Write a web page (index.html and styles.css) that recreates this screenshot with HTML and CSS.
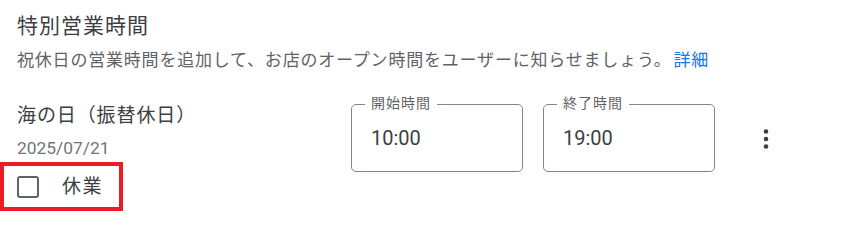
FILE: index.html
```html
<!DOCTYPE html>
<html lang="ja">
<head>
<meta charset="utf-8">
<title>特別営業時間</title>
<link rel="stylesheet" href="styles.css">
</head>
<body>
<div class="page">
  <h1 class="title">特別営業時間</h1>
  <p class="desc">祝休日の営業時間を追加して、お店のオープン時間をユーザーに知らせましょう。<a class="link" href="#">詳細</a></p>
  <div class="row">
    <div class="day">
      <div class="day-name">海の日（振替休日）</div>
      <div class="day-date">2025/07/21</div>
      <label class="closed">
        <span class="checkbox"></span>
        <span class="closed-label">休業</span>
      </label>
    </div>
    <div class="field">
      <span class="field-label">開始時間</span>
      <span class="field-value">10:00</span>
    </div>
    <div class="field">
      <span class="field-label">終了時間</span>
      <span class="field-value">19:00</span>
    </div>
    <div class="more">
      <svg width="30" height="30" viewBox="0 0 24 24" aria-hidden="true">
        <circle cx="12" cy="6" r="1.85" fill="#3c4043"/>
        <circle cx="12" cy="12" r="1.85" fill="#3c4043"/>
        <circle cx="12" cy="18" r="1.85" fill="#3c4043"/>
      </svg>
    </div>
  </div>
</div>
</body>
</html>
```
FILE: styles.css
```css
html, body {
  margin: 0;
  padding: 0;
  background: #ffffff;
}
body {
  font-family: Roboto, "Noto Sans CJK JP", sans-serif;
  color: #3c4043;
}
.page {
  padding: 13px 0 0 17px;
}
.title {
  margin: 0;
  font-size: 21px;
  line-height: 26px;
  font-weight: 400;
  letter-spacing: 1px;
  color: #3c4043;
}
.desc {
  margin: 9px 0 0 0;
  font-size: 17px;
  line-height: 24px;
  letter-spacing: 0.8px;
  color: #5f6368;
}
.link {
  margin-left: 2px;
  color: #1a73e8;
  text-decoration: none;
}
.row {
  margin-top: 28px;
  display: flex;
  align-items: flex-start;
}
.day {
  width: 334px;
  flex: none;
}
.day-name {
  padding-top: 2px;
  font-size: 19px;
  line-height: 28px;
  letter-spacing: 0.9px;
  color: #3c4043;
}
.day-date {
  margin-top: 7px;
  font-size: 17.4px;
  line-height: 22px;
  color: #70757a;
}
.closed {
  margin: 3px 0 0 -17px;
  display: inline-flex;
  align-items: center;
  height: 41px;
  padding: 0 16px 0 13px;
  border: 4px solid #ed1c24;
}
.checkbox {
  width: 22px;
  height: 22px;
  box-sizing: border-box;
  border: 2.4px solid #5f6368;
  border-radius: 3px;
}
.closed-label {
  margin-left: 23px;
  font-size: 19px;
  line-height: 24px;
  letter-spacing: 1.4px;
  color: #3c4043;
}
.field {
  position: relative;
  margin-top: 4px;
  width: 172px;
  height: 68px;
  box-sizing: border-box;
  border: 1px solid #80868b;
  border-radius: 5px;
  display: flex;
  align-items: center;
  padding-left: 19px;
}
.field + .field {
  margin-left: 20px;
}
.field-label {
  position: absolute;
  top: -10px;
  left: 13px;
  padding: 0 6px 0 6px;
  background: #ffffff;
  font-size: 14px;
  line-height: 16px;
  letter-spacing: 1px;
  color: #5f6368;
}
.field-value {
  font-size: 20px;
  line-height: 24px;
  color: #3c4043;
}
.more {
  margin: 24px 0 0 36px;
  width: 30px;
  height: 30px;
}
.more svg {
  display: block;
}
```
